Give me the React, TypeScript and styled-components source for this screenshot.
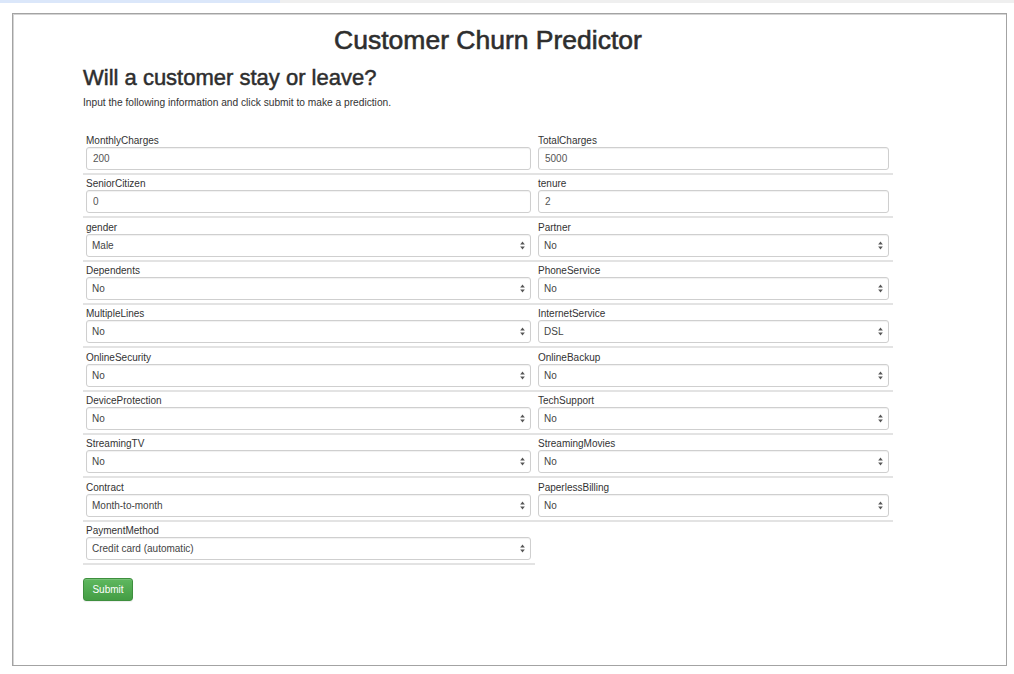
import React from "react";
import styled, { createGlobalStyle } from "styled-components";

const Global = createGlobalStyle`
  html, body { margin: 0; padding: 0; background: #ffffff; }
  body { font-family: "Liberation Sans", Arial, sans-serif; color: #333; }
  * { box-sizing: border-box; }
`;

const TopStrip = styled.div`
  display: flex;
  height: 3px;
`;
const StripBlue = styled.div`
  width: 280px;
  background: #dbe7fa;
`;
const StripGray = styled.div`
  flex: 1;
  background: #efefef;
`;

const Frame = styled.div`
  margin: 10px 0 0 12px;
  width: 995px;
  height: 653px;
  border: 1px solid #a3a3a3;
  box-shadow: inset 1px 1px 0 #d4d4d4;
  padding: 11px 0 0 70px;
`;

const Container = styled.div`
  width: 810px;
  display: flex;
  flex-direction: column;
`;

const Title = styled.h1`
  margin: 0;
  text-align: center;
  font-size: 26.5px;
  line-height: 30px;
  font-weight: 400;
  color: #2e2e2e;
  -webkit-text-stroke: 0.6px #2e2e2e;
`;

const Heading = styled.h2`
  margin: 10px 0 0;
  font-size: 22px;
  line-height: 26px;
  font-weight: 400;
  color: #2e2e2e;
  -webkit-text-stroke: 0.5px #2e2e2e;
`;

const Lead = styled.p`
  margin: 5px 0 0;
  font-size: 10.2px;
  line-height: 14px;
  color: #333;
`;

const FormGrid = styled.div`
  margin-top: 24px;
  display: grid;
  grid-template-columns: 452px 358px;
  row-gap: 2.35px;
`;

const Cell = styled.div`
  display: flex;
  flex-direction: column;
  padding: 0 4px 3px 3px;
  border-bottom: 2px solid #e3e3e3;
`;

const Label = styled.label`
  font-size: 10px;
  line-height: 13px;
  height: 13px;
  color: #333;
`;

const FieldBox = styled.div`
  display: flex;
  align-items: center;
  height: 23px;
  border: 1px solid #cfcfcf;
  border-radius: 3px;
  background: #fff;
  box-shadow: inset 0 1px 1px rgba(0, 0, 0, 0.06);
`;

const TextInput = styled.input`
  flex: 1;
  min-width: 0;
  border: none;
  outline: none;
  background: transparent;
  padding: 0 0 0 6px;
  font-family: "Liberation Sans", Arial, sans-serif;
  font-size: 10px;
  color: #555;
  height: 100%;
`;

const Select = styled.select`
  flex: 1;
  min-width: 0;
  appearance: none;
  -webkit-appearance: none;
  border: none;
  outline: none;
  background: transparent;
  padding: 0 0 0 5px;
  font-family: "Liberation Sans", Arial, sans-serif;
  font-size: 10px;
  color: #444;
  height: 100%;
`;

const Caret = styled.svg`
  flex: none;
  width: 5px;
  height: 9px;
  margin-right: 5px;
`;

const Submit = styled.button`
  margin-top: 13px;
  align-self: flex-start;
  width: 50px;
  height: 23px;
  border: 1px solid #3e8f3e;
  border-radius: 3px;
  background: linear-gradient(to bottom, #5fb85f 0%, #449d44 100%);
  color: #fff;
  font-family: "Liberation Sans", Arial, sans-serif;
  font-size: 10px;
  padding: 0;
  box-shadow: inset 0 1px 0 rgba(255, 255, 255, 0.15), 0 1px 1px rgba(0, 0, 0, 0.075);
`;

type Field =
  | { name: string; kind: "input"; value: string }
  | { name: string; kind: "select"; value: string };

const fields: Field[] = [
  { name: "MonthlyCharges", kind: "input", value: "200" },
  { name: "TotalCharges", kind: "input", value: "5000" },
  { name: "SeniorCitizen", kind: "input", value: "0" },
  { name: "tenure", kind: "input", value: "2" },
  { name: "gender", kind: "select", value: "Male" },
  { name: "Partner", kind: "select", value: "No" },
  { name: "Dependents", kind: "select", value: "No" },
  { name: "PhoneService", kind: "select", value: "No" },
  { name: "MultipleLines", kind: "select", value: "No" },
  { name: "InternetService", kind: "select", value: "DSL" },
  { name: "OnlineSecurity", kind: "select", value: "No" },
  { name: "OnlineBackup", kind: "select", value: "No" },
  { name: "DeviceProtection", kind: "select", value: "No" },
  { name: "TechSupport", kind: "select", value: "No" },
  { name: "StreamingTV", kind: "select", value: "No" },
  { name: "StreamingMovies", kind: "select", value: "No" },
  { name: "Contract", kind: "select", value: "Month-to-month" },
  { name: "PaperlessBilling", kind: "select", value: "No" },
  { name: "PaymentMethod", kind: "select", value: "Credit card (automatic)" },
];

const UpDown = () => (
  <Caret viewBox="0 0 5 9">
    <path d="M2.5 0.5 L4.8 3.6 L0.2 3.6 Z" fill="#555" />
    <path d="M2.5 8.5 L4.8 5.4 L0.2 5.4 Z" fill="#555" />
  </Caret>
);

export default function App() {
  return (
    <>
      <Global />
      <TopStrip>
        <StripBlue />
        <StripGray />
      </TopStrip>
      <Frame>
        <Container>
          <Title>Customer Churn Predictor</Title>
          <Heading>Will a customer stay or leave?</Heading>
          <Lead>Input the following information and click submit to make a prediction.</Lead>
          <FormGrid>
            {fields.map((f) => (
              <Cell key={f.name}>
                <Label>{f.name}</Label>
                <FieldBox>
                  {f.kind === "input" ? (
                    <TextInput defaultValue={f.value} />
                  ) : (
                    <>
                      <Select defaultValue={f.value}>
                        <option>{f.value}</option>
                      </Select>
                      <UpDown />
                    </>
                  )}
                </FieldBox>
              </Cell>
            ))}
          </FormGrid>
          <Submit type="button">Submit</Submit>
        </Container>
      </Frame>
    </>
  );
}
